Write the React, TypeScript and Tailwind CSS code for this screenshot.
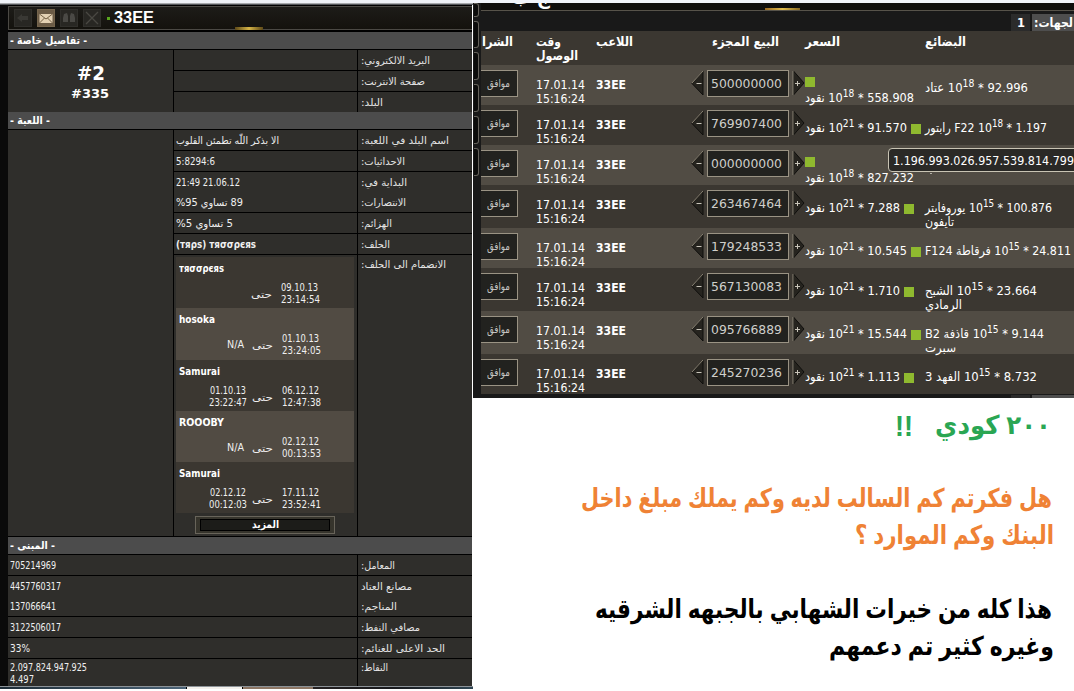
import React, { useLayoutEffect, useRef } from "react";
import type { ReactNode } from "react";

/** A single line of text, condensed or widened to the width of its column. */
function Fit({ w, rtl = false, className = "", children }: { w: number; rtl?: boolean; className?: string; children: ReactNode }) {
  const ref = useRef<HTMLSpanElement>(null);
  useLayoutEffect(() => {
    const el = ref.current;
    if (!el) return;
    el.style.transform = "none";
    const natural = el.getBoundingClientRect().width;
    if (natural > 0) el.style.transform = `scaleX(${w / natural})`;
  }, [w]);
  return (
    <span dir="ltr" className={`block overflow-visible text-left whitespace-nowrap ${className}`} style={{ width: w }}>
      <span ref={ref} dir={rtl ? "rtl" : "ltr"} className="inline-block origin-left align-top">
        {children}
      </span>
    </span>
  );
}

function SectionBar({ title, w }: { title: string; w: number }) {
  return (
    <div className="h-[18px] shrink-0 border-b border-black bg-[#4c4c4c] pl-[2px] text-[11px] leading-[17px] font-bold text-white">
      <Fit w={w} rtl>{title}</Fit>
    </div>
  );
}

type Info = { h: number; line: boolean; label: string; lw: number; value?: ReactNode; vw?: number; rtl?: boolean; bold?: boolean };

function InfoRow({ row }: { row: Info }) {
  return (
    <div className={`flex shrink-0 ${row.line ? "border-b border-black" : ""}`} style={{ height: row.h }}>
      <div className="min-w-0 flex-1 pl-[2px] leading-[22px]">
        {row.value && <Fit w={row.vw ?? 50} rtl={row.rtl} className={row.bold ? "font-bold" : ""}>{row.value}</Fit>}
      </div>
      <div className="w-[115px] border-l border-black pl-[3px] leading-[22px] text-[#e4e4e4]">
        <Fit w={row.lw} rtl>{row.label}</Fit>
      </div>
    </div>
  );
}

const details: Info[] = [
  { h: 21, line: true, label: "البريد الالكتروني:", lw: 69 },
  { h: 21, line: true, label: "صفحة الانترنت:", lw: 64 },
  { h: 20, line: false, label: "البلد:", lw: 22 },
];

const game: Info[] = [
  { h: 21, line: true, label: "اسم البلد في اللعبة:", lw: 88, value: "الا بذكر اللّه تطمئن القلوب", vw: 103, rtl: true },
  { h: 21, line: true, label: "الاحداثيات:", lw: 44, value: "5:8294:6", vw: 39 },
  { h: 20, line: false, label: "البداية في:", lw: 46, value: "21:49 21.06.12", vw: 64 },
  { h: 21, line: true, label: "الانتصارات:", lw: 45, value: <><bdi>%95</bdi> <bdi>تساوي</bdi> <bdi>89</bdi></>, vw: 67 },
  { h: 21, line: true, label: "الهزائم:", lw: 31, value: <><bdi>%5</bdi> <bdi>تساوي</bdi> <bdi>5</bdi></>, vw: 57 },
  { h: 21, line: true, label: "الحلف:", lw: 29, value: "(тяρѕ) тяσσρєяѕ", vw: 80, bold: true },
];

const buildings: Info[] = [
  { h: 21, line: true, label: "المعامل:", lw: 34, value: "705214969", vw: 46 },
  { h: 20, line: false, label: "مصانع العتاد", lw: 51, value: "4457760317", vw: 51 },
  { h: 21, line: true, label: "المناجم:", lw: 36, value: "137066641", vw: 46 },
  { h: 21, line: true, label: "مصافي النفط:", lw: 59, value: "3122506017", vw: 51 },
  { h: 21, line: true, label: "الحد الاعلى للغنائم:", lw: 84, value: "33%", vw: 20 },
];

const alliances = [
  { name: "тяσσρєяѕ", w: 45, from: "", time: "", to: "09.10.13", toTime: "23:14:54", shift: 0, h: 51 },
  { name: "hosoka", w: 36, from: "N/A", time: "", to: "01.10.13", toTime: "23:24:05", shift: 1, h: 52 },
  { name: "Samurai", w: 41, from: "01.10.13", time: "23:22:47", to: "06.12.12", toTime: "12:47:38", shift: 2, h: 51 },
  { name: "ROOOBY", w: 45, from: "N/A", time: "", to: "02.12.12", toTime: "00:13:53", shift: 1, h: 51 },
  { name: "Samurai", w: 41, from: "02.12.12", time: "00:12:03", to: "17.11.12", toTime: "23:52:41", shift: 2, h: 51 },
];

function AllianceRow({ a, light }: { a: (typeof alliances)[number]; light: boolean }) {
  return (
    <div className={light ? "bg-[#514b43]" : "bg-[#3b3731]"} style={{ height: a.h }}>
      <div className="pt-[4px] pl-[3px] text-[10px] leading-[15px] font-bold text-white">
        <Fit w={a.w}>{a.name}</Fit>
      </div>
      <div className="flex pt-[6px]" style={{ paddingLeft: 32 + a.shift / 2 }}>
        <div className="w-[43px] text-[10px] leading-[12px]">
          {a.time ? (
            <>
              <Fit w={36} className="ml-[1px]">{a.from}</Fit>
              <Fit w={38}>{a.time}</Fit>
            </>
          ) : (
            a.from && <Fit w={17} className="mt-[6px] ml-[18px]">{a.from}</Fit>
          )}
        </div>
        <div className="w-[30px] pt-[7px] leading-[12px]">
          <Fit w={21} rtl>حتى</Fit>
        </div>
        <div className="text-[10px] leading-[12px]">
          <Fit w={37}>{a.to}</Fit>
          <Fit w={39}>{a.toTime}</Fit>
        </div>
      </div>
    </div>
  );
}

function ToolIcon({ lit = false, children }: { lit?: boolean; children: ReactNode }) {
  return (
    <span className={`flex h-[18px] w-[18px] items-center justify-center border ${lit ? "border-[#74644c] bg-[#6b5b46]" : "border-[#302f2b] bg-[#282723]"}`}>
      <svg width="16" height="16" viewBox="0 0 16 16">{children}</svg>
    </span>
  );
}

function ProfilePanel() {
  return (
    <div className="flex h-[691px] w-[473px] shrink-0 flex-col bg-white">
      <div className="h-[3px] bg-[#f0f3f8]" />
      <div className="h-[2px] border-t border-[#a7a9ac] bg-[#55575a]" />
      <div className="flex h-[681px]">
        <div className="w-[8px] bg-[#0a0a0a]" />
        <div className="flex w-[464px] flex-col bg-[#2f2e2b]">
          <div className="h-[27px] shrink-0 bg-black pt-px">
            <div className="relative flex h-[24px] items-center border border-r-0 border-[#4b4944] bg-gradient-to-b from-[#1d1c18] to-[#14120d] pl-[5px]">
              <div className="flex gap-[5px]">
                <ToolIcon><path d="M2 8l5-4v2h6v4H7v2z" fill="#393834" /></ToolIcon>
                <ToolIcon lit>
                  <rect x="1.500" y="4" width="13" height="9" fill="#e3d1b4" />
                  <path d="M1.500 4l6.500 5 6.500-5M1.500 13l5-5M14.500 13l-5-5" fill="none" stroke="#756247" />
                </ToolIcon>
                <ToolIcon><path d="M3 4l3-1 1 3v6H2V8zM13 4l-3-1-1 3v6h5V8z" fill="#4a4945" /></ToolIcon>
                <ToolIcon><path d="M2 2l12 12M14 2L2 14" stroke="#494842" strokeWidth="1.300" /></ToolIcon>
              </div>
              <span className="ml-[6px] h-[3px] w-[3px] bg-[#59a51e]" />
              <div className="ml-[4px] font-['Liberation_Sans'] text-[16px] leading-[20px] font-bold text-white">
                <Fit w={40}>33EE</Fit>
              </div>
              <span className="absolute -bottom-[1px] left-[226px] h-[3px] w-[28px] bg-gradient-to-r from-[#5e4a18] via-[#d6b547] to-[#5e4a18]" />
            </div>
          </div>

          <SectionBar title="- تفاصيل خاصة -" w={77} />
          <div className="flex h-[62px] shrink-0">
            <div className="w-[165px] pt-[10px] font-bold text-white">
              <Fit w={28} className="ml-[69px] text-[19px] leading-[26px]">#2</Fit>
              <Fit w={38} className="ml-[63px] text-[13px] leading-[15px]">#335</Fit>
            </div>
            <div className="flex-1 border-l border-black">
              {details.map((r) => <InfoRow key={r.label} row={r} />)}
            </div>
          </div>

          <SectionBar title="- اللعبة -" w={40} />
          <div className="flex h-[407px] shrink-0 border-b border-black">
            <div className="w-[165px]" />
            <div className="flex flex-1 flex-col border-l border-black">
              {game.map((r) => <InfoRow key={r.label} row={r} />)}
              <div className="flex flex-1">
                <div className="flex-1 pt-[2px] pl-[2px]">
                  <div className="w-[178px]">
                    {alliances.map((a, i) => <AllianceRow key={i} a={a} light={i % 2 === 1} />)}
                  </div>
                  <div className="mt-[3px] ml-[19px] h-[18px] w-[140px] border border-[#68645a] bg-[#36342c] p-[2px] px-[4px]">
                    <div className="h-[12px] border border-black bg-[#1c1c19] pl-[51px] text-[11px] leading-[10px] font-bold text-white">
                      <Fit w={27} rtl>المزيد</Fit>
                    </div>
                  </div>
                </div>
                <div className="w-[115px] border-l border-black pl-[3px] leading-[20px] text-[#e4e4e4]">
                  <Fit w={85} rtl>الانضمام الى الحلف:</Fit>
                </div>
              </div>
            </div>
          </div>

          <SectionBar title="- المبنى -" w={45} />
          {buildings.map((r) => <InfoRow key={r.label} row={r} />)}
          <div className="flex flex-1">
            <div className="flex-1 pt-[3px] pl-[2px] leading-[12px]">
              <Fit w={77}>2.097.824.947.925</Fit>
              <Fit w={24}>4.497</Fit>
            </div>
            <div className="w-[115px] border-l border-black pt-[3px] pl-[3px] leading-[12px] text-[#e4e4e4]">
              <Fit w={27} rtl>النقاط:</Fit>
            </div>
          </div>
        </div>
        <div className="w-px bg-white" />
      </div>
      <div className="flex h-[3px] border-t border-[#8d9398]">
        <div className="w-[186px] bg-gradient-to-r from-[#1d2c37] to-[#4c6478]" />
        <div className="w-[57px] border-x border-black bg-[#f3f1ec]" />
        <div className="w-[70px] bg-[#8d7664]" />
        <div className="flex-1 bg-gradient-to-r from-[#242021] via-[#17181c] to-[#2f4654]" />
      </div>
    </div>
  );
}

type Offer = { h: number; amount: string; mant: string; exp: string; pw: number; stacked?: boolean; goods?: ReactNode; gw?: number; rest?: string; rw?: number };

const offers: Offer[] = [
  { h: 40, amount: "500000000", mant: "558.908", exp: "18", pw: 109, stacked: true, goods: <><bdi>عتاد</bdi> 10<Sup>18</Sup> * 92.996</>, gw: 103 },
  { h: 40, amount: "769907400", mant: "91.570", exp: "21", pw: 102, goods: <><bdi>رابتور</bdi> F22 10<Sup>18</Sup> * 1.197</>, gw: 122 },
  { h: 40, amount: "000000000", mant: "827.232", exp: "18", pw: 109, stacked: true },
  { h: 43, amount: "263467464", mant: "7.288", exp: "21", pw: 95, goods: <><bdi>يوروفايتر</bdi> 10<Sup>15</Sup> * 100.876</>, gw: 127, rest: "تايفون", rw: 29 },
  { h: 40, amount: "179248533", mant: "10.545", exp: "21", pw: 102, goods: <>F124 <bdi>فرقاطة</bdi> <bdi>10<Sup>15</Sup> * 24.811</bdi></>, gw: 146 },
  { h: 43, amount: "567130083", mant: "1.710", exp: "21", pw: 95, goods: <><bdi>الشبح</bdi> 10<Sup>15</Sup> * 23.664</>, gw: 112, rest: "الرمادي", rw: 37 },
  { h: 43, amount: "095766889", mant: "15.544", exp: "21", pw: 102, goods: <>B2 <bdi>قاذفة</bdi> <bdi>10<Sup>15</Sup> * 9.144</bdi></>, gw: 119, rest: "سبرت", rw: 31 },
  { h: 40, amount: "245270236", mant: "1.113", exp: "21", pw: 95, goods: <>3 <bdi>الفهد</bdi> <bdi>10<Sup>15</Sup> * 8.732</bdi></>, gw: 112 },
];

function Sup({ children }: { children: ReactNode }) {
  return <span className="relative -top-[5px] text-[10px] leading-[1px]">{children}</span>;
}

function Arrow({ plus = false }: { plus?: boolean }) {
  return (
    <svg width="13" height="26" viewBox="0 0 13 26" className="shrink-0">
      {plus ? (
        <>
          <path d="M1.500 1L12 13 1.500 25z" fill="#26241f" stroke="#0f0e0c" />
          <path d="M1 1v24" stroke="#8a8374" />
          <path d="M3 13.500h5M5.500 11v5" stroke="#c9c5ba" />
        </>
      ) : (
        <>
          <path d="M12 1L1 13.500 12 25z" fill="#26241f" stroke="#0f0e0c" />
          <path d="M12 1L1 13" stroke="#8a8374" fill="none" />
          <path d="M5.500 13.500h5" stroke="#c9c5ba" />
        </>
      )}
    </svg>
  );
}

function OfferRow({ o, light }: { o: Offer; light: boolean }) {
  const price = (
    <Fit w={o.pw}>
      <bdi>نقود</bdi> 10<Sup>{o.exp}</Sup> * {o.mant}
    </Fit>
  );
  return (
    <div className={`grid grid-cols-[55px_60px_95px_114px_120px_149px] ${light ? "bg-[#514c44]" : "bg-[#3b3731]"}`} style={{ height: o.h }}>
      <div className="pt-[5px]">
        <div className="h-[27px] w-[37px] border border-l-0 border-[#9a9384] bg-[#22221f] pl-[6px] text-[11px] leading-[25px] text-[#c6c6c2]">
          <Fit w={23} rtl>موافق</Fit>
        </div>
      </div>
      <div className="pt-[13px] leading-[14px]">
        <Fit w={49}>17.01.14</Fit>
        <Fit w={49}>15:16:24</Fit>
      </div>
      <div className="pt-[13px] leading-[14px] font-bold">
        <Fit w={30}>33EE</Fit>
      </div>
      <div className="flex pt-[5px]">
        <Arrow />
        <div className="mx-[3px] h-[27px] w-[82px] overflow-hidden border border-[#9a9384] bg-[#22221f] pl-[3px] font-['DejaVu_Sans'] text-[12.500px] leading-[25px] text-[#cfcfcb]">
          <Fit w={71}>{o.amount}</Fit>
        </div>
        <Arrow plus />
      </div>
      {o.stacked ? (
        <div className="pt-[12px]">
          <div className="h-[10px] w-[10px] bg-[#8fb92f]" />
          <div className="pt-[4px] leading-[14px]">{price}</div>
        </div>
      ) : (
        <div className="flex pt-[16px] leading-[14px]">
          {price}
          <div className="mt-[3px] ml-[4px] h-[10px] w-[10px] bg-[#8fb92f]" />
        </div>
      )}
      <div className="pt-[16px] leading-[14px]">
        {o.goods ? <Fit w={o.gw ?? 100}>{o.goods}</Fit> : <div className="mt-[12px] ml-[5px] h-px w-[2px] bg-[#b5b1a8]" />}
        {o.rest && <Fit w={o.rw ?? 30} rtl>{o.rest}</Fit>}
      </div>
    </div>
  );
}

function MarketPanel() {
  return (
    <div className="relative flex h-[395px] overflow-hidden bg-[#191919] font-['DejaVu_Sans_Condensed','DejaVu_Sans',sans-serif] text-[12.500px] text-white">
      <div className="flex w-[8px] shrink-0 flex-col gap-[4px]">
        {[14, 27, 28, 28, 28, 28].map((h, i) => (
          <div key={i} className="ml-px w-[5px] rounded-r-[3px] border border-l-0 border-[#65625b] bg-[#0c0c0b]" style={{ height: h }} />
        ))}
      </div>
      <div className="w-[593px]">
        <div className="relative h-[8px] overflow-hidden border-b border-[#57534a] bg-[#100f0d]">
          <div className="-mt-[15px] ml-[31px] text-[18px] leading-[20px] font-bold">
            <Fit w={38} rtl>ج ب</Fit>
          </div>
          <span className="absolute bottom-0 left-[284px] h-[2px] w-[35px] bg-gradient-to-r from-[#9c6a22] via-[#e3bf4f] to-[#8a6a22]" />
        </div>
        <div className="flex h-[20px] justify-end pt-[3px] leading-[17px] font-bold">
          <div className="mr-[2px] w-[19px] bg-[#2b2b2b] pl-[6px]"><Fit w={8}>1</Fit></div>
          <div className="w-[42px] bg-[#4e4e4e] pl-[2px]"><Fit w={39} rtl>لجهات:</Fit></div>
        </div>
        <div className="grid h-[34px] grid-cols-[55px_60px_116px_93px_120px_149px] bg-[#3b3731] pt-[4px] leading-[14px] font-bold">
          <Fit w={31} rtl className="ml-px">الشرا</Fit>
          <div>
            <Fit w={25} rtl>وقت</Fit>
            <Fit w={42} rtl>الوصول</Fit>
          </div>
          <Fit w={37} rtl>اللاعب</Fit>
          <Fit w={67} rtl>البيع المجزء</Fit>
          <Fit w={35} rtl>السعر</Fit>
          <Fit w={41} rtl>البضائع</Fit>
        </div>
        {offers.map((o, i) => <OfferRow key={i} o={o} light={i % 2 === 0} />)}
        <div className="flex h-[4px] justify-end pt-px">
          <div className="mr-[2px] w-[19px] bg-[#2b2b2b]" />
          <div className="w-[42px] bg-[#4e4e4e]" />
        </div>
      </div>
      <div className="absolute top-[145px] left-[415px] h-[24px] w-[195px] rounded-[4px] border border-[#c9c4b4] bg-[#2a2926] pl-[4px] leading-[23px]">
        <Fit w={181}>1.196.993.026.957.539.814.799</Fit>
      </div>
    </div>
  );
}

function Caption() {
  return (
    <div className="flex flex-1 flex-col items-end bg-white pr-[20px] font-['Liberation_Sans','DejaVu_Sans',sans-serif] text-[26px] leading-[37px] font-bold">
      <div className="mt-[9px] mr-[3px] flex items-start text-[#2aa653]">
        <Fit w={18} className="mr-[22px] text-[30px]">!!</Fit>
        <Fit w={116} rtl>٢٠٠ كودي</Fit>
      </div>
      <div className="mt-[36px] text-[#ef8235]">
        <Fit w={471} rtl className="mr-[2px]">هل فكرتم كم السالب لديه وكم يملك مبلغ داخل</Fit>
        <Fit w={199} rtl className="ml-auto">البنك وكم الموارد ؟</Fit>
      </div>
      <div className="mt-[37px] text-black">
        <Fit w={457} rtl className="mr-[2px]">هذا كله من خيرات الشهابي بالجبهه الشرقيه</Fit>
        <Fit w={225} rtl className="ml-auto">وغيره كثير تم دعمهم</Fit>
      </div>
    </div>
  );
}

export default function App() {
  return (
    <div className="flex h-[691px] w-[1074px] overflow-hidden bg-white font-['DejaVu_Sans_Condensed','DejaVu_Sans',sans-serif] text-[10px] text-[#f0f0f0]">
      <ProfilePanel />
      <div className="flex w-[601px] flex-col">
        <div className="h-[3px] bg-[#f1f4fa]" />
        <MarketPanel />
        <Caption />
      </div>
    </div>
  );
}
